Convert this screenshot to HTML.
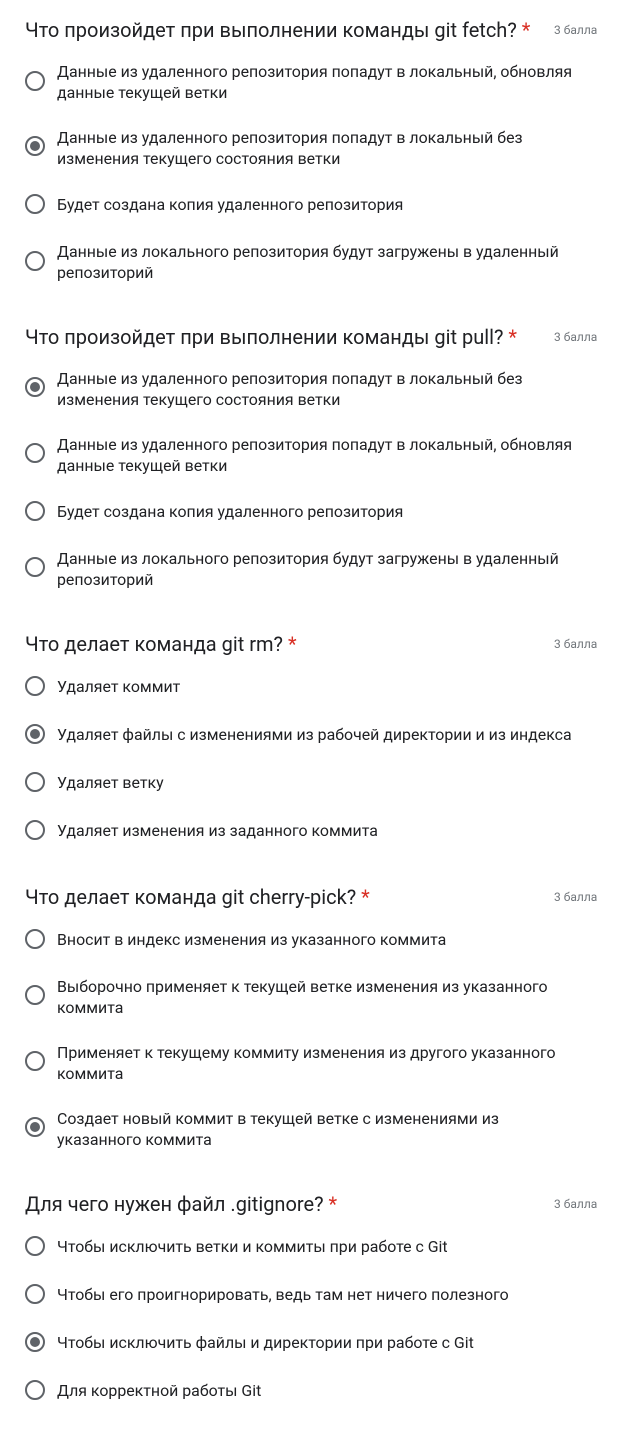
<!DOCTYPE html>
<html><head><meta charset="utf-8"><style>
body{margin:0;width:621px;height:1443px;background:#fff;position:relative;font-family:"Roboto","Liberation Sans",sans-serif;color:#202124;overflow:hidden}
.t{position:absolute;left:25px;font-size:20px;line-height:24px;white-space:nowrap}
.t b{color:#d93025;font-weight:normal}
.p{position:absolute;left:554px;font-size:12px;color:#70757a;line-height:14px}
.o{position:absolute;left:57px;width:523px;font-size:15.9px;line-height:21px;margin-top:1px}
.r{position:absolute;left:25px;width:16px;height:16px;border:2px solid #5f6368;border-radius:50%}
.r.c::after{content:"";position:absolute;left:3px;top:3px;width:10px;height:10px;border-radius:50%;background:#5f6368}
</style></head><body>

<div class="t" style="top:18px">Что произойдет при выполнении команды git fetch? <b>*</b></div><div class="p" style="top:23px">3 балла</div>
<div class="r" style="top:71px"></div><div class="o" style="top:60px">Данные из удаленного репозитория попадут в локальный, обновляя данные текущей ветки</div>
<div class="r c" style="top:136px"></div><div class="o" style="top:126px">Данные из удаленного репозитория попадут в локальный без изменения текущего состояния ветки</div>
<div class="r" style="top:194px"></div><div class="o" style="top:193px">Будет создана копия удаленного репозитория</div>
<div class="r" style="top:251px"></div><div class="o" style="top:240px">Данные из локального репозитория будут загружены в удаленный репозиторий</div>

<div class="t" style="top:325px">Что произойдет при выполнении команды git pull? <b>*</b></div><div class="p" style="top:330px">3 балла</div>
<div class="r c" style="top:377px"></div><div class="o" style="top:367px">Данные из удаленного репозитория попадут в локальный без изменения текущего состояния ветки</div>
<div class="r" style="top:443px"></div><div class="o" style="top:433px">Данные из удаленного репозитория попадут в локальный, обновляя данные текущей ветки</div>
<div class="r" style="top:501px"></div><div class="o" style="top:500px">Будет создана копия удаленного репозитория</div>
<div class="r" style="top:557px"></div><div class="o" style="top:547px">Данные из локального репозитория будут загружены в удаленный репозиторий</div>

<div class="t" style="top:632px">Что делает команда git rm? <b>*</b></div><div class="p" style="top:637px">3 балла</div>
<div class="r" style="top:676px"></div><div class="o" style="top:675px">Удаляет коммит</div>
<div class="r c" style="top:724px"></div><div class="o" style="top:723px">Удаляет файлы с изменениями из рабочей директории и из индекса</div>
<div class="r" style="top:772px"></div><div class="o" style="top:771px">Удаляет ветку</div>
<div class="r" style="top:820px"></div><div class="o" style="top:819px">Удаляет изменения из заданного коммита</div>

<div class="t" style="top:885px">Что делает команда git cherry-pick? <b>*</b></div><div class="p" style="top:890px">3 балла</div>
<div class="r" style="top:929px"></div><div class="o" style="top:928px">Вносит в индекс изменения из указанного коммита</div>
<div class="r" style="top:985px"></div><div class="o" style="top:975px">Выборочно применяет к текущей ветке изменения из указанного коммита</div>
<div class="r" style="top:1051px"></div><div class="o" style="top:1041px">Применяет к текущему коммиту изменения из другого указанного коммита</div>
<div class="r c" style="top:1117px"></div><div class="o" style="top:1107px">Создает новый коммит в текущей ветке с изменениями из указанного коммита</div>

<div class="t" style="top:1192px">Для чего нужен файл .gitignore? <b>*</b></div><div class="p" style="top:1197px">3 балла</div>
<div class="r" style="top:1236px"></div><div class="o" style="top:1235px">Чтобы исключить ветки и коммиты при работе с Git</div>
<div class="r" style="top:1284px"></div><div class="o" style="top:1283px">Чтобы его проигнорировать, ведь там нет ничего полезного</div>
<div class="r c" style="top:1332px"></div><div class="o" style="top:1331px">Чтобы исключить файлы и директории при работе с Git</div>
<div class="r" style="top:1380px"></div><div class="o" style="top:1379px">Для корректной работы Git</div>

</body></html>
